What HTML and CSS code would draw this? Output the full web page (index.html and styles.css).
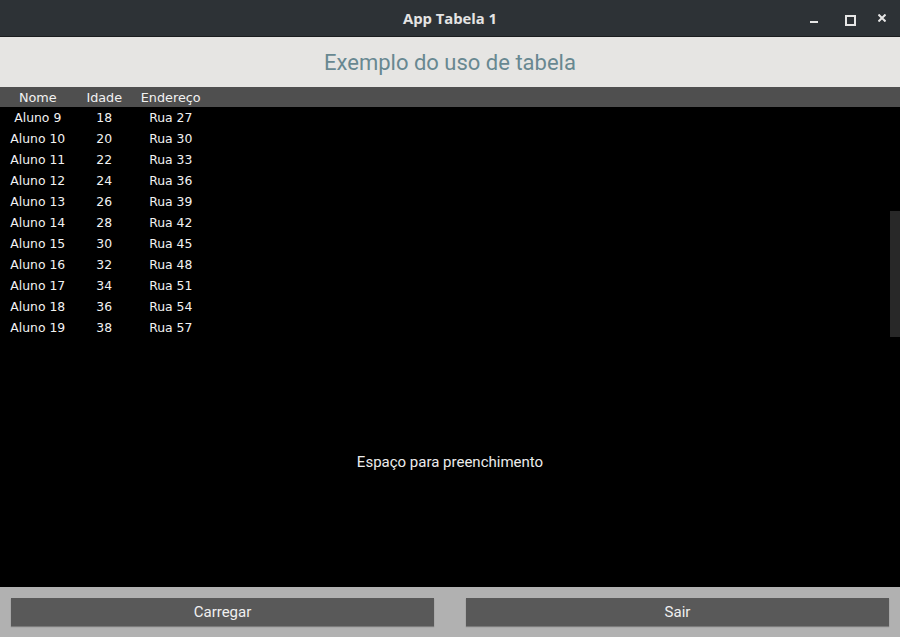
FILE: index.html
```html
<!DOCTYPE html>
<html lang="pt">
<head>
  <meta charset="UTF-8" />
  <title>App Tabela 1</title>
  <link rel="stylesheet" href="styles.css">
</head>
<body>
  <div class="titlebar">
    <div class="title">App Tabela 1</div>
    <div class="controls">
      <span class="ctl ctl-min"></span>
      <span class="ctl ctl-max"></span>
      <span class="ctl ctl-close">
        <svg width="8" height="8" viewBox="0 0 8 8"><path d="M0.5 0.5L7.5 7.5M7.5 0.5L0.5 7.5" stroke="#e6e6e6" stroke-width="2"/></svg>
      </span>
    </div>
  </div>

  <div class="header">Exemplo do uso de tabela</div>

  <div class="table-area">
    <div class="row head">
      <div class="cell">Nome</div>
      <div class="cell">Idade</div>
      <div class="cell">Endereço</div>
    </div>
    <div id="rows"></div>
    <div class="scrollbar"></div>
  </div>

  <div class="filler">Espaço para preenchimento</div>

  <div class="footer">
    <div class="btn">Carregar</div>
    <div class="btn">Sair</div>
  </div>

  <script>
    const rows = document.getElementById('rows');
    for (let i = 9; i <= 19; i++) {
      const row = document.createElement('div');
      row.className = 'row';
      row.innerHTML =
        '<div class="cell">Aluno ' + i + '</div>' +
        '<div class="cell">' + (i * 2) + '</div>' +
        '<div class="cell">Rua ' + (i * 3) + '</div>';
      rows.appendChild(row);
    }
  </script>
</body>
</html>
```

FILE: styles.css
```css
* {
  box-sizing: border-box;
}

body {
  margin: 0;
  width: 900px;
  height: 637px;
  background: #000;
  overflow: hidden;
  display: flex;
  flex-direction: column;
  font-family: 'Roboto', sans-serif;
}

.titlebar {
  height: 37px;
  background: #2d3236;
  border-bottom: 1px solid #1b1d1f;
  position: relative;
  display: flex;
  align-items: center;
  justify-content: center;
}

.title {
  color: #e4e4e4;
  font-family: 'Open Sans', sans-serif;
  font-weight: 700;
  font-size: 14.8px;
}

.controls {
  position: absolute;
  right: 14px;
  top: 14px;
  display: flex;
  gap: 26px;
}

.ctl {
  width: 8px;
  height: 8px;
  display: flex;
  position: relative;
}

.ctl-min::after {
  content: "";
  position: absolute;
  left: 0;
  bottom: -1px;
  width: 8px;
  height: 2px;
  background: #e6e6e6;
}

.ctl-max::after {
  content: "";
  position: absolute;
  left: 1px;
  top: 1px;
  width: 7px;
  height: 7px;
  border: 2px solid #e6e6e6;
}

.header {
  height: 50px;
  background: #e6e5e3;
  color: #688891;
  font-size: 22px;
  display: flex;
  align-items: center;
  justify-content: center;
}

.table-area {
  height: 250px;
  position: relative;
  font-family: 'DejaVu Sans', sans-serif;
  color: #f2f2f2;
}

.row {
  display: flex;
  height: 21px;
  align-items: center;
  padding-left: 4.5px;
  font-size: 12.4px;
}

.row.head {
  height: 20px;
  background: #4f4f4f;
  font-size: 12.8px;
  padding-top: 1px;
}

.cell {
  width: 66.5px;
  text-align: center;
}

.scrollbar {
  position: absolute;
  right: 0;
  top: 124px;
  width: 10px;
  height: 126px;
  background: #282828;
}

.filler {
  height: 250px;
  display: flex;
  align-items: center;
  justify-content: center;
  color: #ececec;
  font-size: 15px;
}

.footer {
  flex: 1;
  background: #b1b1b1;
  display: flex;
  gap: 32px;
  padding: 11px 11px 0 11px;
}

.btn {
  flex: 1;
  height: 28px;
  background: #595959;
  color: #f0f0f0;
  font-size: 15px;
  display: flex;
  align-items: center;
  justify-content: center;
  box-shadow: 0 1px 1px rgba(0, 0, 0, 0.3);
}
```
